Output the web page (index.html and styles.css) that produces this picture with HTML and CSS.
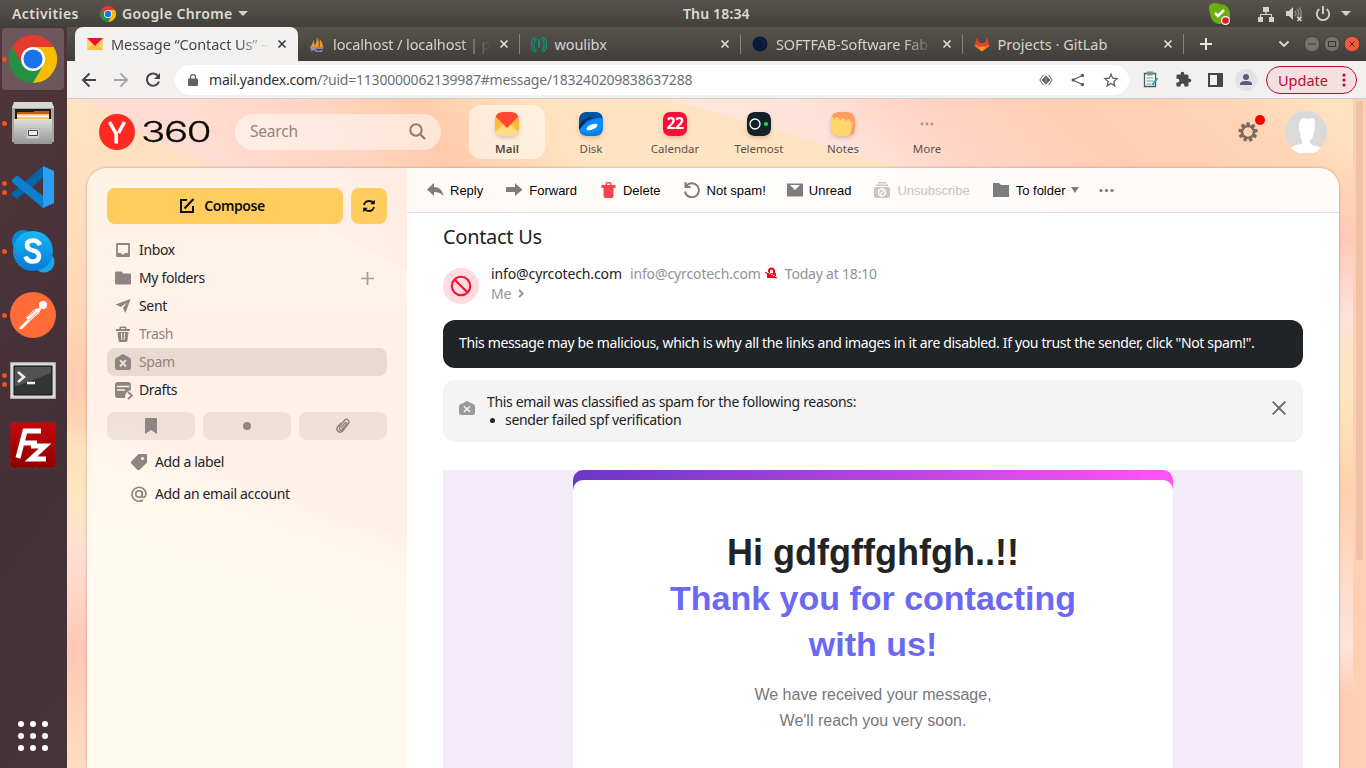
FILE: index.html
```html
<!DOCTYPE html>
<html lang="en">
<head>
<meta charset="utf-8">
<title>Message "Contact Us"</title>
<link rel="stylesheet" href="styles.css">
</head>
<body>
<svg class="defs" width="0" height="0"><defs>
  <g id="chrome"><path fill="#249043" d="M24 48A24 24 0 0 1 3.200 12L14 30 24 36 34.400 30z"/><path fill="#e33b2e" d="M3.200 12A24 24 0 0 1 44.800 12H24A12 12 0 0 0 13.600 30z"/><path fill="#fbbc05" d="M44.800 12A24 24 0 0 1 24 48L34.400 30 24 12z"/><circle cx="24" cy="24" r="12" fill="#fff"/><circle cx="24" cy="24" r="9.600" fill="#1a73e8"/></g>
  <path id="x" d="M1.500 1.500l7 7M8.500 1.500l-7 7" fill="none" stroke="currentColor" stroke-width="1.700"/>
  <g id="spam"><path fill="currentColor" d="M8 0 15 4q1 .6 1 2v7.500q0 2.500-2.500 2.500h-11Q0 16 0 13.500V6Q0 4.600 1 4z"/><path d="M5 6.200l6 6.300M11 6.200l-6 6.300" stroke="#eee2dc" stroke-width="1.900"/></g>
</defs></svg>
<header class="topbar">
  <span class="activities">Activities</span>
  <svg class="top-chrome" viewBox="0 0 48 48"><use href="#chrome"/></svg>
  <span class="app-name">Google Chrome</span><i class="caret"></i>
  <span class="clock">Thu 18:34</span>
  <div class="tray">
    <svg width="23" height="23" viewBox="0 0 23 23"><path fill="#6aab16" d="M1 6Q1 1 7 1q2 0 4 1 10 0 11 9v4q0 7-7 7-12 1-13-11Q1 9 1 6z"/><path d="m7 11 3 3 6-6" fill="none" stroke="#fff" stroke-width="2.500"/><circle cx="17.500" cy="18.500" r="4.500" fill="#fff"/><circle cx="17.500" cy="18.500" r="3.300" fill="#ea1b22"/></svg>
    <svg class="net" width="16" height="16" viewBox="0 0 16 16"><path fill="#d5d2cc" d="M5 1h6v5H5zM0 11h5v5H0zM11 11h5v5h-5zM7.400 6h1.200v2.500H7.400zM2 8h12v3h-1V9H3v2H2z"/></svg>
    <svg class="vol" width="17" height="16" viewBox="0 0 17 16"><path fill="#d5d2cc" d="M0 5h3l4-4v13l-4-4H0z"/><path d="M9 5q2 3 0 5M11 3q3.500 4 0 9M13 1.500q4 5 1 10" fill="none" stroke="#8c8983" stroke-width="1.500"/><path d="m11.500 11 4 4m0-4-4 4" stroke="#d5d2cc" stroke-width="1.700"/></svg>
    <svg class="power" width="16" height="16" viewBox="0 0 16 16"><path d="M4.300 3a6.200 6.200 0 1 0 7.400 0M8 0v8" fill="none" stroke="#d5d2cc" stroke-width="1.900"/></svg>
    <i class="caret"></i>
  </div>
</header>
<div class="desktop">
<nav class="dock">
  <div class="app chosen"><i class="run"></i><svg width="48" height="48" viewBox="0 0 48 48"><use href="#chrome"/></svg></div>
  <div class="app"><i class="run"></i><svg width="48" height="48" viewBox="0 0 48 48"><defs><linearGradient id="cab" x2="0" y2="1"><stop stop-color="#dededd"/><stop offset="1" stop-color="#969694"/></linearGradient></defs><path fill="#a7a7a5" d="M3 7h42v36H3z"/><path fill="#d8d8d6" d="M5 3h38l2 6H3z"/><path fill="#1c1c1b" d="M6 10h36v11H6z"/><path fill="#c75a16" d="M8 13h16l2-1h14v4H8z"/><path fill="#ffc173" d="M8 15h32v6H8z"/><path fill="#fff" d="M8 16.500h32V18H8z"/><path fill="url(#cab)" d="M5 20h38v25H5z"/><rect x="17.500" y="29.500" width="13" height="10" rx="2" fill="#d4d4d2" stroke="#b5b5b5"/><path fill="#eee" stroke="#454545" d="M19.500 31.500h9v5h-9z"/></svg></div>
  <div class="app"><i class="run pair"></i><svg width="48" height="48" viewBox="0 0 48 48"><path fill="#0065a9" d="M34 3v12L8 36l-5-4v-2z"/><path fill="#0c80cd" d="m3 17 4-4h2l25 20v12L3 19z"/><path fill="#2aa0f2" d="m34 3 11 5v32l-11 5z"/></svg></div>
  <div class="app"><i class="run"></i><svg width="48" height="48" viewBox="0 0 48 48"><defs><linearGradient id="sky" x2="0" y2="1"><stop stop-color="#16b9f2"/><stop offset="1" stop-color="#0877d7"/></linearGradient></defs><circle cx="14" cy="14" r="11" fill="#0787d4"/><circle cx="35" cy="35" r="10.500" fill="#17a5ea"/><circle cx="24" cy="24" r="20" fill="url(#sky)"/><path d="M31 18q-2-4.500-7-4.500-6 0-6 4.500 0 4 6 5.500t6 5.500q0 5.500-6 5.500-6 0-7.500-5" fill="none" stroke="#fff" stroke-width="4.600"/></svg></div>
  <div class="app"><i class="run"></i><svg width="48" height="48" viewBox="0 0 48 48"><circle cx="24" cy="24" r="23" fill="#ff6c37"/><circle cx="34" cy="14" r="4" fill="#fff"/><path d="m31 17-5 1-10 9 3 1-8 8-1 2h3l8-8 9-8 2-4z" fill="#fff"/><path d="m15 28 12-9M20 29l9-8" stroke="#ff6c37" stroke-width=".8"/></svg></div>
  <div class="app lower"><i class="run pair"></i><svg width="48" height="48" viewBox="0 0 48 48"><path fill="#d8d8d8" stroke="#aaa" d="M1.500 5.500h45v36h-45z"/><path fill="#343635" stroke="#151515" d="M5 9h38v29H5z"/><path fill="#515352" d="M6 10h36v6L8 29H6z"/><path d="m9 15 6 5-6 5M18 26h8" fill="none" stroke="#eee" stroke-width="2.500"/></svg></div>
  <div class="app lower"><svg width="48" height="48" viewBox="0 0 48 48"><defs><linearGradient id="fz" x2="0" y2="1"><stop stop-color="#c50909"/><stop offset="1" stop-color="#900000"/></linearGradient></defs><path fill="url(#fz)" d="M1 1h46v46H1z"/><path fill="none" stroke="#49353b" stroke-width="4" stroke-linecap="round" stroke-dasharray=".1 5.900" d="M3 0h44M3 48h44M0 3v44M48 3v44"/><path d="M9 37 16 10h16M13 22h15M22 25h14L22 38h15" fill="none" stroke="#fff" stroke-width="5"/></svg></div>
  <svg class="launcher" width="32" height="32" viewBox="0 0 32 32"><g fill="#fff"><circle cx="4" cy="4" r="3"/><circle cx="16" cy="4" r="3"/><circle cx="28" cy="4" r="3"/><circle cx="4" cy="16" r="3"/><circle cx="16" cy="16" r="3"/><circle cx="28" cy="16" r="3"/><circle cx="4" cy="28" r="3"/><circle cx="16" cy="28" r="3"/><circle cx="28" cy="28" r="3"/></g></svg>
</nav>
<main class="browser">
  <div class="tabs">
    <div class="tab current"><svg width="16" height="16" viewBox="0 0 16 16"><path fill="#ffd468" d="M0 2h16v12H0z"/><path fill="#ffbd3e" d="m0 14 5-5h6l5 5z"/><path fill="#f10d38" d="M0 2h16l-8 8z"/></svg><span class="title fade">Message “Contact Us” –</span><svg class="close" viewBox="0 0 10 10"><use href="#x"/></svg></div>
    <div class="tab"><svg width="16" height="16" viewBox="0 0 18 18"><path fill="#f89422" d="M1 13Q5 8 5 4l2 9zm5 0q3-6 3-12 3 6 2 12zm6 0V3q4 5 4 10z"/><path d="M1 13.500h15M2 16.500q3-3 6 0t7-.5" fill="none" stroke="#9293b8" stroke-width="1.700"/></svg><span class="title fade">localhost / localhost | p</span><svg class="close" viewBox="0 0 10 10"><use href="#x"/></svg></div>
    <div class="tab"><svg width="16" height="17" viewBox="0 0 17 17"><g fill="none" stroke="#059a7a" stroke-width="1.300"><path d="M5 1C-1 2-1 15 5 16M6 2C2 6 2 12 6 15M12 1c6 1 6 14 0 15M11 2c4 4 4 10 0 13"/><path stroke-width="2" d="M8.500 3v9"/></g></svg><span class="title">woulibx</span><svg class="close" viewBox="0 0 10 10"><use href="#x"/></svg></div>
    <div class="tab"><svg width="16" height="16" viewBox="0 0 17 17"><circle cx="8.500" cy="8.500" r="8" fill="#071c3d"/><path d="M8 3q7 2 4 9" fill="none" stroke="#451b3f" stroke-width="2" stroke-dasharray="1 1"/></svg><span class="title fade">SOFTFAB-Software Fab</span><svg class="close" viewBox="0 0 10 10"><use href="#x"/></svg></div>
    <div class="tab"><svg width="16" height="17" viewBox="0 0 17 17"><path fill="#e24329" d="m3 1 2.500 6h6L14 1l2.500 9-8 6-8-6z"/><path fill="#fc6d26" d="m.5 10 3-1 5 7zm16 0-3-1-5 7z"/><path fill="#fca326" d="m4.500 11 4 5 4-5z"/></svg><span class="title gitlab">Projects · GitLab</span><svg class="close" viewBox="0 0 10 10"><use href="#x"/></svg></div>
    <svg class="new-tab" width="14" height="14" viewBox="0 0 14 14"><path d="M7 1v12M1 7h12" stroke="#e9e8e5" stroke-width="2"/></svg>
    <svg class="tab-list" width="12" height="8" viewBox="0 0 12 8"><path d="m1.500 1.500 4.500 4.500 4.500-4.500" fill="none" stroke="#dedcd7" stroke-width="1.800"/></svg>
    <div class="window-buttons">
      <svg viewBox="0 0 16 16"><circle cx="8" cy="8" r="7.700" fill="#77746c" stroke="#33312c" stroke-width=".7"/><path d="M4 8h8" stroke="#383630"/></svg>
      <svg viewBox="0 0 16 16"><circle cx="8" cy="8" r="7.700" fill="#77746c" stroke="#33312c" stroke-width=".7"/><path d="M4.500 5.500h7v5h-7z" fill="none" stroke="#383630"/></svg>
      <svg viewBox="0 0 16 16"><circle cx="8" cy="8" r="7.700" fill="#f15a3a" stroke="#452b24" stroke-width=".7"/><path d="m5.500 5.500 5 5m0-5-5 5" stroke="#552318"/></svg>
    </div>
  </div>
  <div class="toolbar">
    <svg width="16" height="16" viewBox="0 0 16 16"><path d="M15 8H2m6.500-6.500L2 8l6.500 6.500" fill="none" stroke="#454545" stroke-width="1.900"/></svg>
    <svg width="16" height="16" viewBox="0 0 16 16"><path d="M1 8h13M7.500 1.500 14 8l-6.500 6.500" fill="none" stroke="#a6a6a6" stroke-width="1.900"/></svg>
    <svg width="16" height="16" viewBox="0 0 16 16"><path d="M13.300 4.200A6.200 6.200 0 1 0 14 9.500" fill="none" stroke="#454545" stroke-width="2"/><path fill="#454545" d="M15 1v6H9z"/></svg>
    <div class="address">
      <svg width="10" height="12" viewBox="0 0 10 12"><path fill="#5f6368" d="M1 4.500h8q1 0 1 1V11q0 1-1 1H1q-1 0-1-1V5.500q0-1 1-1z"/><path d="M2.500 5V3q0-2.300 2.500-2.300T7.500 3v2" fill="none" stroke="#5f6368" stroke-width="1.300"/></svg>
      <span class="url"><b>mail.yandex.com</b>/?uid=1130000062139987#message/183240209838637288</span>
      <svg width="14" height="14" viewBox="0 0 14 14"><path fill="#606060" d="m7 2.500 4.500 4.500L7 11.500 2.500 7z"/><path d="M4.500 2 .8 7l3.700 5M9.500 2l3.700 5-3.700 5" fill="none" stroke="#606060"/><path d="M7 4.500v5" stroke="#fff" stroke-width=".5"/></svg>
      <svg width="14" height="14" viewBox="0 0 14 14"><path d="m12 2-10 5 10 5" fill="none" stroke="#606060" stroke-width="1.300"/><g fill="#606060"><circle cx="11.500" cy="2.500" r="1.700"/><circle cx="2.300" cy="7" r="1.700"/><circle cx="11.500" cy="11.500" r="1.700"/></g></svg>
      <svg width="16" height="16" viewBox="0 0 16 16"><path d="m8 2.200 1.700 4 4.400.4-3.300 2.900 1 4.300L8 11.500l-3.800 2.300 1-4.300-3.300-2.900 4.400-.4z" fill="none" stroke="#606060" stroke-width="1.300"/></svg>
    </div>
    <svg width="16" height="17" viewBox="0 0 16 17"><path fill="#fff" stroke="#455d66" stroke-width="1.300" d="M1.500 2.500h11v13h-11z"/><path fill="#78919a" d="M4 .5h6v4H4z"/><path d="M3.500 7h7m-7 3h7m-7 3h5" stroke="#7995a0"/><path d="m9.500 14 5-7" stroke="#22a7a4" stroke-width="2"/></svg>
    <svg width="17" height="17" viewBox="0 0 24 24"><path fill="#474747" d="M20.500 11H19V7c0-1.100-.9-2-2-2h-4V3.500a2.500 2.500 0 0 0-5 0V5H4c-1.100 0-2 .9-2 2v3.800h1.500a2.700 2.700 0 0 1 0 5.400H2V20c0 1.100.9 2 2 2h3.800v-1.500a2.700 2.700 0 0 1 5.400 0V22H17c1.100 0 2-.9 2-2v-4h1.500a2.500 2.500 0 0 0 0-5z"/></svg>
    <svg width="15" height="16" viewBox="0 0 15 16"><path fill="#474747" d="M0 1h15v14H0zm2 2v10h7V3z"/></svg>
    <svg class="person" width="22" height="22" viewBox="0 0 22 22"><circle cx="11" cy="11" r="11" fill="#dfe2e8"/><circle cx="11" cy="8" r="3" fill="#52606f"/><path fill="#52606f" d="M5 16v-1q0-3 6-3t6 3v1z"/></svg>
    <div class="update"><span>Update</span><svg width="4" height="14" viewBox="0 0 4 14"><g fill="#c5072d"><circle cx="2" cy="2" r="1.600"/><circle cx="2" cy="7" r="1.600"/><circle cx="2" cy="12" r="1.600"/></g></svg></div>
  </div>
  <section class="page">
    <svg class="wallpaper" viewBox="0 0 1299 669" preserveAspectRatio="none"><defs>
      <linearGradient id="left" x2="0" y2="1"><stop stop-color="#ffe4c4"/><stop offset=".2" stop-color="#ffdcbc"/><stop offset=".31" stop-color="#ffd6b9"/><stop offset=".42" stop-color="#ffccb0"/><stop offset=".48" stop-color="#ffd3b0"/><stop offset=".52" stop-color="#ffe2bd"/><stop offset=".61" stop-color="#ffe7c5"/><stop offset=".68" stop-color="#ffdfd3"/><stop offset=".82" stop-color="#ffc8b6"/><stop offset="1" stop-color="#ffdcc0"/></linearGradient>
      <linearGradient id="pink" gradientUnits="userSpaceOnUse" x1="170" y1="90" x2="450" y2="-60"><stop stop-color="#ffdccf"/><stop offset=".35" stop-color="#ffd5c2"/><stop offset=".62" stop-color="#ffcbab"/><stop offset=".85" stop-color="#ffdbb5"/><stop offset="1" stop-color="#ffe3c2"/></linearGradient>
      <linearGradient id="rose" x1="0" y1=".5" x2="1" y2=".2"><stop stop-color="#ffeddd"/><stop offset=".3" stop-color="#ffe2d9"/><stop offset=".48" stop-color="#ffd2c1"/><stop offset=".65" stop-color="#ffcdb3"/><stop offset=".85" stop-color="#ffd3b4"/><stop offset="1" stop-color="#ffe3c0"/></linearGradient>
      <linearGradient id="right" x2="0" y2="1"><stop stop-color="#ffd8b9"/><stop offset=".12" stop-color="#ffc9b8"/><stop offset=".25" stop-color="#fde2dd"/><stop offset=".3" stop-color="#ffe4c6"/><stop offset=".38" stop-color="#ffe6c0"/><stop offset=".54" stop-color="#ffd1ae"/><stop offset=".7" stop-color="#ffdccb"/><stop offset=".8" stop-color="#ffe4db"/><stop offset=".88" stop-color="#ffcdb3"/><stop offset="1" stop-color="#ffcdb1"/></linearGradient>
      <linearGradient id="cream" gradientUnits="userSpaceOnUse" x1="130" y1="350" x2="90" y2="460"><stop stop-color="#ffecd2" stop-opacity="0"/><stop offset=".4" stop-color="#ffedd2"/><stop offset="1" stop-color="#ffefd6"/></linearGradient>
      <linearGradient id="middle" x2="0" y2="1"><stop stop-color="#ffe2c1"/><stop offset=".3" stop-color="#ffdcc2"/><stop offset=".65" stop-color="#ffdacc"/><stop offset="1" stop-color="#ffdfcf"/></linearGradient>
    </defs><path fill="url(#left)" d="M0 0h1299v669H0z"/><path fill="url(#middle)" d="M20 69h320v600H20z"/><path fill="url(#pink)" d="M13 0h821v290L340 171z"/><path fill="url(#rose)" d="M603 0h696v200H1275L834 69z"/><path fill="url(#cream)" d="M20 300 340 440v229H20z"/><path fill="url(#right)" d="M1272 69h27v600h-27z"/></svg>
    <div class="mail">
      <header class="mail-head">
        <svg class="yandex" width="36" height="36" viewBox="0 0 36 36"><circle cx="18" cy="18" r="18" fill="#fc2a20"/><path d="m10.500 8 6.700 12v9.500M25.500 8l-6 11" fill="none" stroke="#fff" stroke-width="3.500"/></svg>
        <span class="suite"><span>360</span></span>
        <div class="search"><span>Search</span><svg width="17" height="17" viewBox="0 0 17 17"><circle cx="7" cy="7" r="5.700" fill="none" stroke="#887d76" stroke-width="2"/><path d="m11.500 11.500 4.500 4.500" stroke="#887d76" stroke-width="2.200"/></svg></div>
        <nav class="services">
          <a class="service active"><svg viewBox="0 0 24 24"><defs><clipPath id="r"><rect width="24" height="24" rx="7"/></clipPath></defs><g clip-path="url(#r)"><path fill="#ffd97c" d="M0 0h24v24H0z"/><path fill="#ffba3d" d="M0 5v15l9-8h6l9 8V5z"/><path fill="#ffdc89" d="m0 22 10-8h4l10 8v2H0z"/><path fill="#ff4932" d="M0 0h24v4L12 16 0 4z"/></g></svg><span>Mail</span></a>
          <a class="service"><svg viewBox="0 0 24 24"><g clip-path="url(#r)"><path fill="#067ce6" d="M0 0h24v24H0z"/><path fill="#0054a4" d="M0 0h24v6Q12 4 0 17z"/><path fill="#002c5b" d="M0 13Q6 4 16 5 8 6 0 18z"/><path fill="#078ef8" d="M1 18Q12 4 24 7v8Q14 24 2 20z"/><ellipse cx="13" cy="15" rx="6" ry="2.500" fill="#fff" transform="rotate(-24 13 15)"/></g></svg><span>Disk</span></a>
          <a class="service"><b class="day">22</b><span>Calendar</span></a>
          <a class="service telemost"><svg viewBox="0 0 24 24"><rect width="24" height="24" rx="7" fill="#14202a"/><circle cx="8" cy="12" r="5" fill="none" stroke="#fff" stroke-width="1.300"/><circle cx="19" cy="12" r="2" fill="#12e54a"/></svg><span>Telemost</span></a>
          <a class="service"><svg viewBox="0 0 24 24"><g clip-path="url(#r)"><path fill="#ff9c66" d="M0 0h24v24H0z"/><path fill="#ffd66c" d="m0 4 2 1 1 3 2-3 3 1 1 3 2-3 3 1 1 3 2-3 2 1 1 3 2-2-3 15H0z"/></g></svg><span>Notes</span></a>
          <a class="service more"><svg viewBox="0 0 24 24"><g fill="#a0928c"><circle cx="7" cy="12" r="1.400"/><circle cx="12" cy="12" r="1.400"/><circle cx="17" cy="12" r="1.400"/></g></svg><span>More</span></a>
        </nav>
        <svg class="settings" width="30" height="34" viewBox="0 0 30 34"><g transform="translate(11 23)"><circle r="5.900" fill="none" stroke="#786a60" stroke-width="2.300"/><g fill="#786a60"><path id="tooth" d="M-1.300-9.700h3L2-6h-4z"/><use href="#tooth" transform="rotate(40)"/><use href="#tooth" transform="rotate(80)"/><use href="#tooth" transform="rotate(120)"/><use href="#tooth" transform="rotate(160)"/><use href="#tooth" transform="rotate(200)"/><use href="#tooth" transform="rotate(240)"/><use href="#tooth" transform="rotate(280)"/><use href="#tooth" transform="rotate(320)"/></g></g><circle cx="23" cy="11" r="5" fill="#f00"/></svg>
        <svg class="avatar" width="42" height="42" viewBox="0 0 42 42"><circle cx="21" cy="21" r="21" fill="#dadada"/><path fill="#fff" d="M14 14q0-6 5-7l2 1 8-1q1 4 1 8l-1 6q-1 6-4 9v2q1 2 6 3l5 2a21 21 0 0 1-30 0q5-4 11-4v-4q-2-3-2-8l-1-2z"/></svg>
      </header>
      <div class="panel">
        <aside class="sidebar">
          <div class="compose-row"><div class="compose"><svg width="16" height="16" viewBox="0 0 16 16"><path d="M8 2H2v12h12V8" fill="none" stroke="#111" stroke-width="2"/><path d="M5.500 10.500 14.500 1" stroke="#111" stroke-width="2.200"/></svg><b>Compose</b></div><div class="refresh"><svg width="14" height="14" viewBox="0 0 14 14"><path d="M2 6q1-4 5-4 3 0 4.500 2M12 8q-1 4-5 4-3 0-4.500-2" fill="none" stroke="#111" stroke-width="1.800"/><path d="M12.700.8v4.400H8.300zM1.300 13.200V8.800h4.400z"/></svg></div></div>
          <div class="folder"><svg viewBox="0 0 16 16"><path d="M2 2h12v12H2z" fill="none" stroke="currentColor" stroke-width="1.800" stroke-linejoin="round"/><path fill="currentColor" d="M2 11h4l1 1.500h2l1-1.500h4v4H2z"/></svg><span>Inbox</span></div>
          <div class="folder"><svg viewBox="0 0 16 16"><path fill="currentColor" d="M1 1.500h5.500L8 3.500h7q1 0 1 1V13q0 1.500-1.500 1.500h-13Q0 14.500 0 13V2.500q0-1 1-1z"/></svg><span>My folders</span><svg class="plus" viewBox="0 0 12 12"><path d="M6 0v12M0 6h12" stroke="#a79c97" stroke-width="1.600"/></svg></div>
          <div class="folder"><svg viewBox="0 0 16 16"><path fill="currentColor" d="M15.500 1 10.500 15 8 10l4-5.500L6 9 .5 6.500z"/></svg><span>Sent</span></div>
          <div class="folder muted"><svg viewBox="0 0 16 16"><path fill="currentColor" d="M1 3h3.500V1.500q0-1 1-1h5q1 0 1 1V3H15v2H1zm5 0h4V2H6zM2.500 6h11l-1 8.500q-.2 1.500-1.700 1.500H5.200q-1.500 0-1.700-1.500zM6 7l.4 7h.9L7 7zm3 0-.3 7h.9L10 7z"/></svg><span>Trash</span></div>
          <div class="folder muted selected"><svg viewBox="0 0 16 16"><use href="#spam"/></svg><span>Spam</span></div>
          <div class="folder"><svg class="draft" viewBox="0 0 19 19"><path fill="currentColor" d="M3 1h10q3 0 3 3v5q-6 1-6 8H3q-3 0-3-3V4q0-3 3-3z"/><path d="M2 5.500h12.500M2 9h8" stroke="#fff0e5" stroke-width="1.300"/><path d="m13 11 4 3.500-4 3.500" fill="none" stroke="currentColor" stroke-width="1.900"/></svg><span>Drafts</span></div>
          <div class="filters"><div><svg viewBox="0 0 16 16"><path fill="currentColor" d="M2 1q0-1 1-1h10q1 0 1 1v15l-6-4-6 4z"/></svg></div><div><svg viewBox="0 0 16 16"><circle cx="8" cy="8" r="4" fill="currentColor"/></svg></div><div><svg viewBox="0 0 16 16"><path d="m4 9 5-6q2-3 4-1t0 4l-5.500 7q-2 2-4.300.4T2.500 9L6 5M6 10l4-5q1-1 1.500 0t-.5 2l-4 5q-1 1-2 0t0-2.500" fill="none" stroke="currentColor" stroke-width="1.500"/></svg></div></div>
          <div class="extra"><svg viewBox="0 0 16 16"><path fill="currentColor" d="M7.500 0H15q1 0 1 1v7.500L8.500 16q-1 .5-2 0L.3 9.500q-.7-1 0-2z"/><circle cx="11.500" cy="4.500" r="1.600" fill="#fff1e7"/></svg><span>Add a label</span></div>
          <div class="extra"><svg viewBox="0 0 16 16"><circle cx="8" cy="8" r="3.200" fill="none" stroke="currentColor" stroke-width="1.600"/><path d="M11.200 5v5q0 1.500 1.500 1.500T15 8a7 7 0 1 0-3 6" fill="none" stroke="currentColor" stroke-width="1.600"/></svg><span>Add an email account</span></div>
        </aside>
        <section class="reader">
          <div class="actions">
            <a><svg viewBox="0 0 17 16"><path fill="#7d7d7d" d="M7 1v4q8 0 9.500 9Q13 10 7 10v4L0 7.500z"/></svg>Reply</a>
            <a><svg viewBox="0 0 17 16"><path fill="#7d7d7d" d="M0 5h9V1l7.500 6.700L9 14v-4H0z"/></svg>Forward</a>
            <a class="delete"><svg viewBox="0 0 14 16"><path fill="#fa4351" d="M4 3V1.500Q4 0 6 0h2q2 0 2 1.500V3h4v3H0V3zm1.500 0h3V1.500h-3zM2 6h10v8q0 2-2 2H4q-2 0-2-2z"/></svg>Delete</a>
            <a class="restore"><svg viewBox="0 0 17 16"><path d="M2 4.500a7 7 0 1 1-1 5" fill="none" stroke="#7d7d7d" stroke-width="2"/><path d="M1.500 0v5h5" fill="none" stroke="#7d7d7d" stroke-width="2"/></svg>Not spam!</a>
            <a class="unread"><svg viewBox="0 0 17 16"><path fill="#7d7d7d" d="M0 1.500h16v13H0z"/><path fill="#fff" d="M3 3h10L8 8z"/></svg>Unread</a>
            <a class="off"><svg viewBox="0 0 17 16"><path d="M4 .8h8M2 3.200h12" stroke="#c8c8c8" stroke-width="1.400"/><rect y="5" width="16" height="11" rx="2" fill="#c8c8c8"/><circle cx="8" cy="10.500" r="3.500" fill="none" stroke="#fff" stroke-width="1.400"/><path d="m6 12.500 4-4" stroke="#fff" stroke-width="1.300"/></svg>Unsubscribe</a>
            <a><svg viewBox="0 0 17 16"><path fill="#7d7d7d" d="M0 1h6l2 2h8v12H0z"/></svg>To folder<i></i></a>
            <a class="dots"><svg viewBox="0 0 16 16"><g fill="#777"><circle cx="2.500" cy="8.500" r="1.600"/><circle cx="8" cy="8.500" r="1.600"/><circle cx="13.500" cy="8.500" r="1.600"/></g></svg></a>
          </div>
          <article class="message">
            <h1>Contact Us</h1>
            <div class="sender">
              <svg class="blocked" width="36" height="36" viewBox="0 0 36 36"><circle cx="18" cy="18" r="18" fill="#ffdcde"/><circle cx="18" cy="18" r="9.200" fill="none" stroke="#fb0c39" stroke-width="2.100"/><path d="m11.500 11.500 13 13" stroke="#fb0c39" stroke-width="2.100"/></svg>
              <div><div class="line"><span class="from">info@cyrcotech.com</span><span>info@cyrcotech.com</span><svg class="unlocked" width="12" height="12" viewBox="0 0 12 12"><path fill="#f7001e" d="M2 6h9v5H2z"/><path d="M4 6.500V4q0-2.500 2.500-2.500T9 4v2.500" fill="none" stroke="#f7001e" stroke-width="2"/><path d="m0 4.200 12 6" stroke="#fff" stroke-width="1"/><path d="m0 5.300 11.700 5.900" stroke="#f7001e" stroke-width="1.300"/></svg><span class="date">Today at 18:10</span></div><div class="line to"><span>Me</span><svg width="6" height="9" viewBox="0 0 6 9"><path d="m1 .8 3.700 3.700L1 8.200" fill="none" stroke="#929292" stroke-width="1.900"/></svg></div></div>
            </div>
            <div class="danger">This message may be malicious, which is why all the links and images in it are disabled. If you trust the sender, click "Not spam!".</div>
            <div class="reason"><svg width="16" height="14" viewBox="0 0 16 16" preserveAspectRatio="none"><use href="#spam"/></svg><div><p>This email was classified as spam for the following reasons:</p><p class="bullet"><i></i>sender failed spf verification</p></div><svg class="dismiss" width="14" height="14" viewBox="0 0 14 14"><path d="m.7.700 12.600 12.600m0-12.600L.7 13.300" stroke="#666" stroke-width="1.800"/></svg></div>
            <div class="letter"><div class="rim"><div class="card"><h2>Hi gdfgffghfgh..!!</h2><h3>Thank you for contacting<br>with us!</h3><p>We have received your message,<br>We'll reach you very soon.</p></div></div></div>
          </article>
        </section>
      </div>
    </div>
    <div class="scrollbar"><i></i></div>
  </section>
</main>
</div>
</body>
</html>
```
FILE: styles.css
```css
* { box-sizing: border-box; }
body { margin: 0; width: 1366px; height: 768px; overflow: hidden; font: 14px "Noto Sans", sans-serif; color: #222; }
svg { display: block; flex: none; }
.defs { position: absolute; }
h1, h2, h3, p { margin: 0; font-weight: normal; }
.topbar { height: 27px; display: grid; grid-template-columns: 88px 16px 122px 10px 1fr auto; align-items: center; padding: 0 15px 0 12px; background: linear-gradient(#57544c, #42403a); color: #dedbd5; font-weight: 600; font-size: 14px; position: relative; }
.top-chrome { width: 16px; height: 16px; }
.activities { letter-spacing: .45px; }
.app-name { padding-left: 6px; letter-spacing: .35px; white-space: nowrap; }
.caret { border: 5px solid transparent; border-top-color: #d5d2cc; border-bottom: 0; width: 0; }
.clock { position: absolute; left: 683px; letter-spacing: .15px; white-space: nowrap; }
.tray { grid-column: 6; display: flex; align-items: center; height: 27px; }
.net { margin-left: 27px; }
.vol { margin-left: 12px; }
.power { margin: 0 10px 0 12px; }
.desktop { display: flex; height: 741px; }
.dock { width: 67px; padding: 1px 3px 0 2px; background: linear-gradient(125deg, #50353b, #443037 60%, #473339); display: flex; flex-direction: column; align-items: center; gap: 2px; }
.app { width: 62px; height: 62px; border-radius: 4px; display: flex; align-items: center; justify-content: center; position: relative; }
.app.chosen { background: #6c585c; }
.app.lower { padding-top: 3px; }
.run { position: absolute; left: 0; width: 5px; height: 5px; border-radius: 50%; background: #e95420; }
.run.pair { top: 25px; box-shadow: 0 9px #e95420; }
.launcher { margin-top: auto; margin-bottom: 16px; }
.browser { width: 1299px; display: flex; flex-direction: column; }
.tabs { height: 34px; display: flex; align-items: center; padding-left: 8px; background: linear-gradient(#57544c, #403e39); color: #d5d3ce; }
.tab { width: 221.500px; height: 20px; display: flex; align-items: center; gap: 8px; padding: 0 10px 0 11px; border-right: 1px solid #87847d; }
.tab.current { width: 223px; height: 34px; background: #f2f1f0; color: #454545; border-radius: 8px 8px 0 0; border: 0; padding: 0 11px 0 12px; }
.title { flex: 1; white-space: nowrap; letter-spacing: -.1px; font-size: 14.500px; line-height: 20px; }
.title.gitlab { letter-spacing: 0; }
.fade { -webkit-mask-image: linear-gradient(90deg, #000 80%, transparent); mask-image: linear-gradient(90deg, #000 80%, transparent); }
.close { width: 10px; height: 10px; color: #dedcd7; }
.current .close { color: #3e3e3e; }
.new-tab { margin-left: 15px; }
.tab-list { margin-left: 65px; }
.window-buttons { display: flex; gap: 4px; margin-left: 14px; }
.window-buttons svg { width: 16px; height: 16px; }
.toolbar { height: 38px; display: flex; align-items: center; gap: 16px; padding-left: 14px; background: #f2f1f0; border-bottom: 1px solid #cdcdcb; }
.address { flex: none; width: 954px; height: 30px; border-radius: 15px; background: #fff; display: flex; align-items: center; gap: 18px; padding: 0 10px 0 13px; margin: 0 -2px 0 -2px; }
.url { flex: 1; margin-left: -7px; color: #6b6f74; white-space: nowrap; letter-spacing: -.21px; }
.url b { font-weight: normal; color: #303236; }
.person { margin: 0 -7px 0 -4px; }
.update { flex: none; width: 91px; height: 28px; border: 1.500px solid #c5072d; border-radius: 14px; background: #f4dfe1; color: #c5072d; display: flex; align-items: center; justify-content: space-between; padding: 0 10px 0 11px; font-size: 14.500px; }
.page { height: 669px; position: relative; display: flex; }
.wallpaper { position: absolute; width: 1299px; height: 669px; }
.mail { width: 1286px; position: relative; padding: 0 14px 0 20px; }
.mail-head { height: 69px; display: flex; align-items: center; padding-left: 12px; }
.yandex { margin-top: -4px; }
.suite { width: 73px; height: 36px; margin: -4px 21px 0 6px; font: 300 28px/37px Inter, sans-serif; color: #080808; }
.suite span { display: inline-block; transform: scaleX(1.440); transform-origin: 0 50%; letter-spacing: -1px; -webkit-text-stroke: .3px #080808; }
.search { width: 206px; height: 36px; border-radius: 18px; background: rgba(255,255,255,.5); margin-top: -4px; padding: 0 15px; display: flex; align-items: center; justify-content: space-between; color: #93847e; font-size: 15.500px; letter-spacing: -.2px; }
.search span { padding-bottom: 1px; }
.services { display: flex; gap: 8px; margin-left: 28px; }
.service { width: 76px; height: 54px; margin-top: -4px; border-radius: 12px; padding-top: 7px; display: flex; flex-direction: column; align-items: center; color: #5c5149; font-size: 11.500px; line-height: 16px; gap: 5px; }
.service svg, .day { width: 24px; height: 24px; border-radius: 7px; filter: drop-shadow(0 2px 2px rgba(70,35,20,.2)); }
.service.active { background: rgba(255,255,255,.52); font-weight: 600; color: #514840; }
.service.more svg { filter: none; }
.day { background: #fb0d39; color: #fff; text-align: center; font-size: 16px; line-height: 23px; letter-spacing: -.7px; }
.settings { margin: -16px 18px 0 272px; }
.avatar { margin-top: -4px; }
.panel { width: 1252px; height: 600px; display: flex; border-radius: 20px 20px 0 0; overflow: hidden; box-shadow: 0 0 3px rgba(90,50,30,.4); }
.sidebar { width: 320px; background: rgba(255,255,255,.6); padding: 20px; }
.compose-row { display: flex; gap: 8px; margin-bottom: 12px; }
.compose { width: 236px; height: 36px; border-radius: 8px; background: #ffcc60; display: flex; align-items: center; justify-content: center; gap: 9px; padding-right: 6px; color: #111; }
.compose b { font-weight: 600; letter-spacing: -.45px; padding-bottom: 1px; }
.refresh { width: 36px; border-radius: 8px; background: #ffcc60; display: grid; place-items: center; }
.folder { height: 28px; border-radius: 8px; display: flex; align-items: center; padding: 0 13px 0 8px; gap: 8px; letter-spacing: -.35px; color: #25222a; }
.folder span, .extra span { padding-bottom: 2px; }
.folder svg, .extra svg, .filters svg { width: 16px; height: 16px; color: #8e8482; }
.folder .draft { width: 19px; height: 19px; margin-right: -3px; }
.folder .plus { width: 13px; height: 13px; margin-left: auto; }
.folder.muted { color: #91847e; }
.selected { background: rgba(110,90,80,.15); }
.filters { display: flex; gap: 8px; margin: 8px 0; }
.filters div { flex: 1; height: 28px; border-radius: 8px; background: rgba(110,90,80,.1); display: grid; place-items: center; }
.extra { height: 28px; margin: 0 0 4px 24px; display: flex; align-items: center; gap: 8px; letter-spacing: -.35px; color: #25222a; }
.reader { width: 932px; background: linear-gradient(rgba(255,255,255,.9) 45px, #fff 45px); }
.actions { height: 45px; border-bottom: 1px solid #e4dfdc; display: flex; align-items: center; gap: 23px; padding: 0 20px; font: 13px "Liberation Sans", sans-serif; color: #050505; }
.actions a { display: flex; align-items: center; gap: 6px; white-space: nowrap; }
.actions svg { width: 17px; height: 16px; }
.actions .delete { margin-left: 1px; gap: 7px; }
.actions .delete svg { width: 15px; }
.actions .restore { margin-right: -2px; }
.actions .unread { gap: 5px; }
.actions .off { color: #c5c5c5; }
.actions i { border: 4px solid transparent; border-top: 6px solid #7d7d7d; border-bottom: 0; margin-left: -1px; }
.actions .dots { margin-left: -4px; }
.message { padding: 0 36px; }
h1 { font-size: 20px; line-height: 28px; letter-spacing: -.3px; padding-top: 10px; }
.sender { height: 69px; padding-top: 12px; display: flex; align-items: flex-start; gap: 12px; }
.blocked { margin-top: 5px; }
.line { display: flex; align-items: center; height: 20px; color: #929292; letter-spacing: -.12px; white-space: nowrap; }
.line .from { color: #222; margin-right: 8px; }
.line .date { letter-spacing: -.2px; }
.unlocked { margin: 0 8px 0 4px; }
.to { gap: 7px; }
.danger { height: 48px; border-radius: 12px; background: #202427; color: #fff; line-height: 46px; padding-left: 16px; letter-spacing: -.35px; white-space: nowrap; }
.reason { height: 62px; margin: 12px 0 28px; border-radius: 12px; background: #f4f4f4; display: flex; padding: 13px 17px 0 16px; gap: 12px; line-height: 18px; letter-spacing: -.33px; }
.reason > svg { color: #999; margin-top: 8px; }
.reason .dismiss { margin: 8px 0 0 auto; }
.bullet { display: flex; align-items: center; gap: 10px; padding-left: 3px; }
.bullet i { width: 5px; height: 5px; border-radius: 50%; background: #222; }
.letter { height: 310px; background: #f3ebf8; padding: 0 130px; }
.rim { height: 310px; padding-top: 10px; background: linear-gradient(90deg, #6b37c5, #ff52f7) 0 0/100% 20px no-repeat, #fff; border-radius: 10px 10px 0 0; }
.card { height: 300px; background: #fff; border-radius: 10px 10px 0 0; text-align: center; padding-top: 50px; font-family: "Liberation Sans", sans-serif; }
h2 { font-weight: bold; font-size: 36px; line-height: 45px; color: #242424; }
h3 { font-weight: bold; font-size: 34px; line-height: 46px; color: #6b68f4; }
.card p { margin-top: 15px; font-size: 16px; line-height: 26px; color: #777; }
.scrollbar { position: relative; width: 13px; background: #ffcfb3; padding: 2px 3px; }
.scrollbar i { display: block; width: 7px; height: 459px; border-radius: 4px; background: #f0c0a7; }
```
